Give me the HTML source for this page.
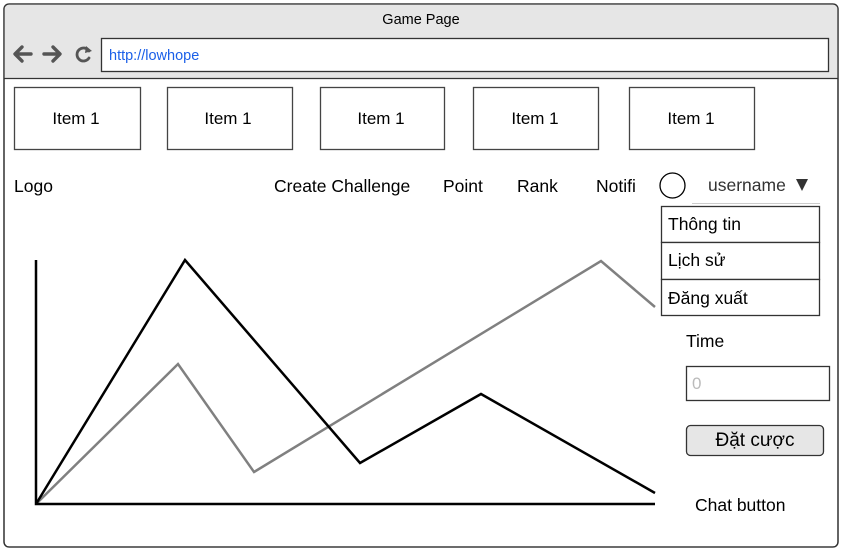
<!DOCTYPE html>
<html><head><meta charset="utf-8"><style>
html,body{margin:0;padding:0;background:#fff;width:841px;height:551px;overflow:hidden}
svg text{font-family:"Liberation Sans","Noto Sans CJK SC",sans-serif}
</style></head><body>
<svg width="841" height="551" viewBox="0 0 841 551" xmlns="http://www.w3.org/2000/svg">
<rect x="4" y="4" width="834" height="543" rx="5" fill="#fff" stroke="#333" stroke-width="1.3"/>
<path d="M4 78 V9 a5 5 0 0 1 5 -5 H833 a5 5 0 0 1 5 5 V78 Z" fill="#e6e6e6"/>
<line x1="4" y1="78.5" x2="838" y2="78.5" stroke="#333" stroke-width="1.3"/>
<rect x="4" y="4" width="834" height="543" rx="5" fill="none" stroke="#333" stroke-width="1.3"/>
<text x="421" y="24" font-size="14.5" text-anchor="middle" fill="#000">Game Page</text>
<g stroke="#555" stroke-width="3.4" fill="none" stroke-linecap="round" stroke-linejoin="round">
<path d="M31 54 H16 M22 47 L15 54 L22 61"/>
<path d="M44 54 H59 M53 47 L60 54 L53 61"/>
<path d="M89 51 A6.5 6.5 0 1 0 89 58" stroke-width="2.8"/>
</g>
<path d="M86 46 L92 51 L85 53 Z" fill="#555"/>
<rect x="101.5" y="38.5" width="727" height="33" fill="#fff" stroke="#333" stroke-width="1.3"/>
<text x="109" y="60" font-size="14.5" fill="#1a5fe8">http://lowhope</text>
<g fill="#fff" stroke="#444" stroke-width="1.3">
<rect x="14.5" y="87.5" width="126" height="62"/>
<rect x="167.5" y="87.5" width="125" height="62"/>
<rect x="320.5" y="87.5" width="124" height="62"/>
<rect x="473.5" y="87.5" width="125" height="62"/>
<rect x="629.5" y="87.5" width="125" height="62"/>
</g>
<g font-size="17" fill="#000" text-anchor="middle">
<text x="76" y="124">Item 1</text>
<text x="228" y="124">Item 1</text>
<text x="381" y="124">Item 1</text>
<text x="535" y="124">Item 1</text>
<text x="691" y="124">Item 1</text>
</g>
<g font-size="17.5" fill="#000">
<text x="14" y="192">Logo</text>
<text x="274" y="192">Create Challenge</text>
<text x="443" y="192">Point</text>
<text x="517" y="192">Rank</text>
<text x="596" y="192">Notifi</text>
<text x="708" y="191" fill="#333">username</text>
<text x="686" y="347">Time</text>
<text x="695" y="511">Chat button</text>
</g>
<circle cx="672.5" cy="185.5" r="12.5" fill="none" stroke="#000" stroke-width="1.3"/>
<path d="M796 179 H808 L802 191 Z" fill="#333"/>
<line x1="692" y1="203.5" x2="820" y2="203.5" stroke="#ccc"/>
<g fill="#fff" stroke="#333" stroke-width="1.3">
<rect x="661.5" y="206.5" width="158" height="36"/>
<rect x="661.5" y="242.5" width="158" height="37"/>
<rect x="661.5" y="279.5" width="158" height="36"/>
</g>
<g font-size="17.5" fill="#000">
<text x="668" y="230">Thông tin</text>
<text x="668" y="266">Lịch sử</text>
<text x="668" y="304">Đăng xuất</text>
</g>
<rect x="686.5" y="366.5" width="143" height="34" fill="#fff" stroke="#333" stroke-width="1.3"/>
<text x="692" y="389" font-size="17" fill="#bbb">0</text>
<rect x="686.5" y="425.5" width="137" height="30" rx="4" fill="#e6e6e6" stroke="#333" stroke-width="1.3"/>
<text x="755" y="446" font-size="19" fill="#000" text-anchor="middle">Đặt cược</text>
<g fill="none" stroke-width="2.5" stroke-linejoin="miter">
<path d="M36 504 L178 364 L254 472 L601 261 L655 307" stroke="#808080"/>
<path d="M36 504 L185 260 L360 463 L481 394 L655 493" stroke="#000"/>
<path d="M36 260 V504 H655" stroke="#000"/>
</g>
</svg>
</body></html>
